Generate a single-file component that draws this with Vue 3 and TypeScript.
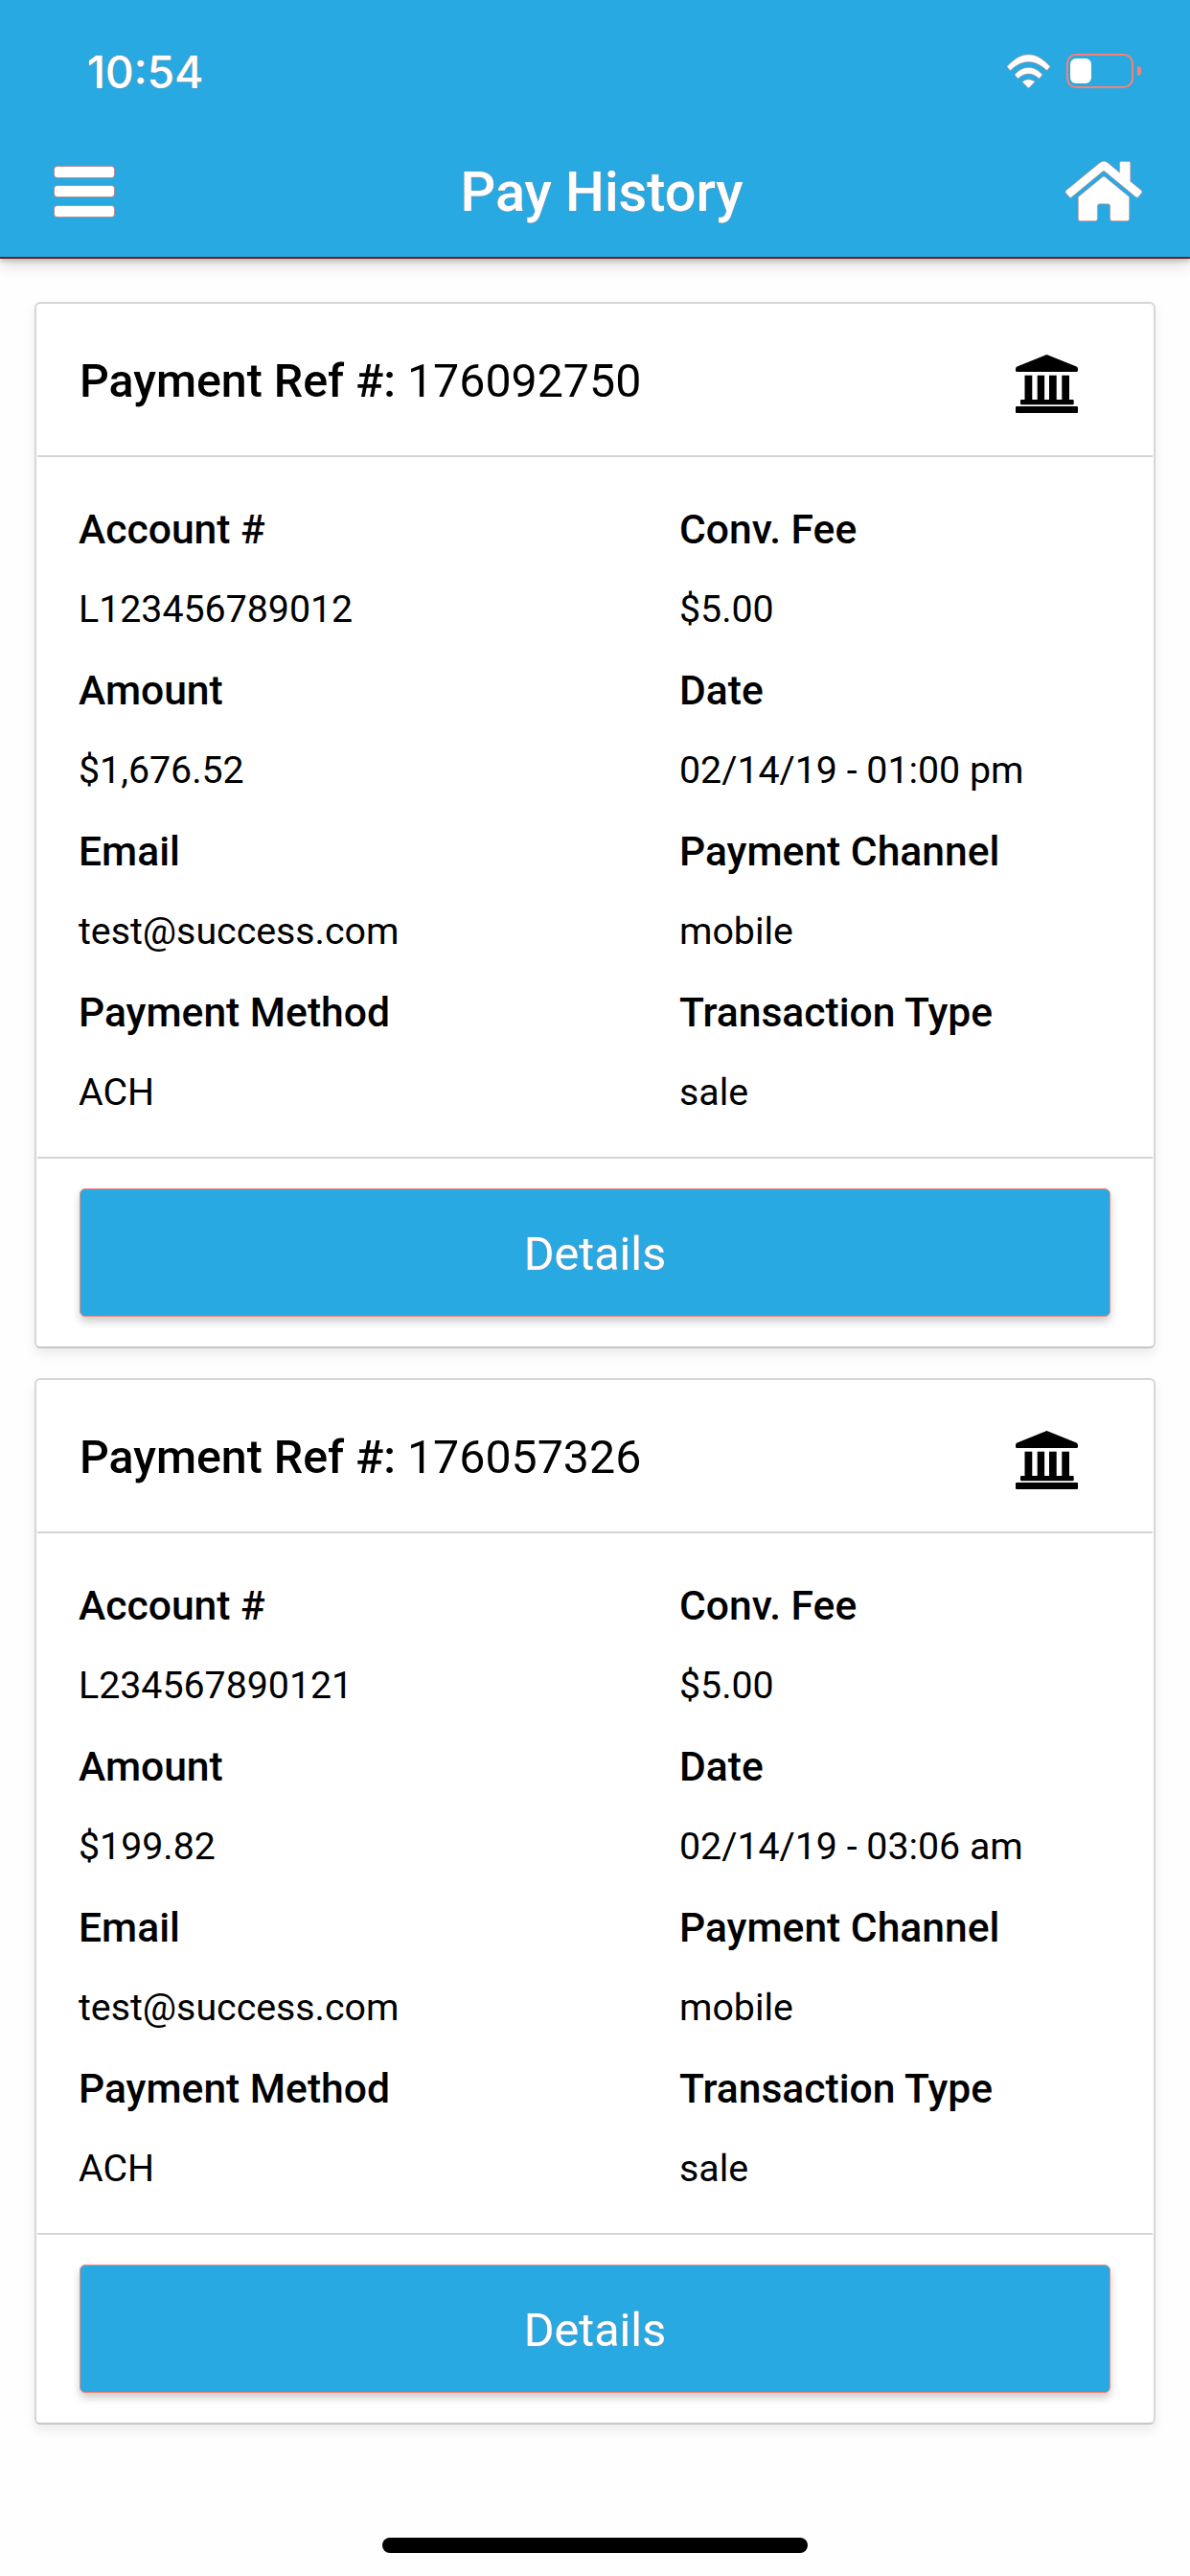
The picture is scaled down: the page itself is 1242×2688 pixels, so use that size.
<script setup lang="ts">
interface Field { label: string; value: string }
interface Payment { ref: string; fields: Field[] }

const payments: Payment[] = [
  {
    ref: '176092750',
    fields: [
      { label: 'Account #', value: 'L123456789012' },
      { label: 'Conv. Fee', value: '$5.00' },
      { label: 'Amount', value: '$1,676.52' },
      { label: 'Date', value: '02/14/19 - 01:00 pm' },
      { label: 'Email', value: 'test@success.com' },
      { label: 'Payment Channel', value: 'mobile' },
      { label: 'Payment Method', value: 'ACH' },
      { label: 'Transaction Type', value: 'sale' },
    ],
  },
  {
    ref: '176057326',
    fields: [
      { label: 'Account #', value: 'L234567890121' },
      { label: 'Conv. Fee', value: '$5.00' },
      { label: 'Amount', value: '$199.82' },
      { label: 'Date', value: '02/14/19 - 03:06 am' },
      { label: 'Email', value: 'test@success.com' },
      { label: 'Payment Channel', value: 'mobile' },
      { label: 'Payment Method', value: 'ACH' },
      { label: 'Transaction Type', value: 'sale' },
    ],
  },
]
</script>

<template>
  <div class="page">
    <header class="topbar">
      <div class="status">
        <span class="time">10:54</span>
        <div class="status-icons">
          <svg class="wifi" viewBox="0 0 47 36" aria-hidden="true">
            <path d="M1 13.500C6.500 7.500 14 1 23.500 1S40.500 7.500 46 13.500L42.500 17.500C37.500 12.500 31 8.500 23.500 8.500S9.500 12.500 4.500 17.500Z" />
            <path d="M9 22C12.500 18 17.500 14.500 23.500 14.500S34.500 18 38 22L34.500 26C31.500 23 28 21 23.500 21S15.500 23 12.500 26Z" />
            <path d="M17 29.500C18.500 28 20.800 27 23.500 27S28.500 28 30 29.500L23.500 36Z" />
          </svg>
          <div class="battery"><div class="battery-level"></div></div>
          <div class="battery-nub"></div>
        </div>
      </div>
      <nav class="navbar">
        <button class="menu" type="button" aria-label="Menu">
          <span></span><span></span><span></span>
        </button>
        <h1 class="title">Pay History</h1>
        <svg class="home" viewBox="0 0 576 512" aria-hidden="true">
          <path d="M280.37 148.26L96 300.11V464a16 16 0 0 0 16 16l112.06-.29a16 16 0 0 0 15.92-16V368a16 16 0 0 1 16-16h64a16 16 0 0 1 16 16v95.64a16 16 0 0 0 16 16.05L464 480a16 16 0 0 0 16-16V300L295.67 148.26a12.19 12.19 0 0 0-15.3 0zM571.6 251.47L488 182.56V44.05a12 12 0 0 0-12-12h-56a12 12 0 0 0-12 12v72.61L318.47 43a48 48 0 0 0-61 0L4.34 251.47a12 12 0 0 0-1.6 16.9l25.5 31A12 12 0 0 0 45.15 301l235.22-193.74a12.19 12.19 0 0 1 15.3 0L530.9 301a12 12 0 0 0 16.9-1.6l25.5-31a12 12 0 0 0-1.7-16.93z" />
        </svg>
      </nav>
    </header>

    <main class="list">
      <article v-for="p in payments" :key="p.ref" class="card">
        <div class="card-head">
          <div class="ref"><b>Payment Ref #:</b> {{ p.ref }}</div>
          <svg class="bank" viewBox="0 0 65 61" aria-hidden="true">
            <path d="M32.500 0L63.500 12.500Q65 13 65 15V16.500Q65 18 63.500 18H1.500Q0 18 0 16.500V15Q0 13 1.500 12.500Z" />
            <rect x="9.500" y="21.700" width="7.800" height="26" />
            <rect x="22.700" y="21.700" width="7.400" height="26" />
            <rect x="35" y="21.700" width="7.700" height="26" />
            <rect x="48.300" y="21.700" width="7.700" height="26" />
            <rect x="5" y="47" width="55.700" height="5.300" rx="1" />
            <rect x="0" y="54" width="65" height="7" rx="1" />
          </svg>
        </div>
        <div class="grid">
          <div v-for="f in p.fields" :key="f.label" class="field">
            <div class="label">{{ f.label }}</div>
            <div class="value">{{ f.value }}</div>
          </div>
        </div>
        <div class="card-foot">
          <button class="details" type="button">Details</button>
        </div>
      </article>
    </main>

    <div class="home-indicator"></div>
  </div>
</template>

<style scoped>
.page {
  width: 1242px;
  height: 2688px;
  display: flex;
  flex-direction: column;
  background: #fefefe;
  font-family: Roboto, "Liberation Sans", sans-serif;
  color: #000;
  overflow: hidden;
}
.topbar {
  height: 268px;
  background: #29a9e1;
  border-bottom: 2px solid #6b2020;
  box-sizing: content-box;
  box-shadow: 0 3px 4px rgba(0, 0, 0, 0.16), 0 8px 14px rgba(0, 0, 0, 0.12);
  display: flex;
  flex-direction: column;
  flex: none;
}
.status {
  height: 150px;
  padding: 52px 51px 0 91px;
  box-sizing: border-box;
  display: flex;
  justify-content: space-between;
  align-items: flex-start;
}
.time {
  font-family: Inter, Roboto, sans-serif;
  font-weight: 500;
  font-size: 46px;
  line-height: 46px;
  color: #fff;
  text-shadow: 0 0 1px #fa8072;
}
.status-icons {
  display: flex;
  align-items: center;
  height: 36px;
  margin-top: 4px;
}
.wifi {
  width: 47px;
  height: 36px;
  fill: #fff;
  stroke: #fa8072;
  stroke-width: 0.5;
  margin-right: 16px;
}
.battery {
  width: 70px;
  height: 36px;
  box-sizing: border-box;
  border: 2px solid #fa8072;
  border-radius: 10px;
  padding: 3px 2px;
}
.battery-level {
  width: 22px;
  height: 100%;
  background: #fff;
  border-radius: 6px;
}
.battery-nub {
  width: 4px;
  height: 10px;
  margin-left: 4px;
  background: #fa8072;
  border-radius: 0 5px 5px 0;
}
.navbar {
  flex: 1;
  position: relative;
  display: flex;
  align-items: flex-start;
  justify-content: space-between;
  padding: 13.500px 50px 0 57px;
}
.menu {
  width: 62px;
  height: 52px;
  margin-top: 10px;
  padding: 0;
  border: 0;
  background: none;
  display: flex;
  flex-direction: column;
  justify-content: space-between;
}
.menu span {
  display: block;
  height: 11px;
  background: #fff;
  border-radius: 3px;
  box-shadow: 0 0 0 1px rgba(250, 128, 114, 0.7);
}
.title {
  position: absolute;
  left: 14px;
  right: 0;
  top: 18px;
  margin: 0;
  text-align: center;
  font-weight: 500;
  font-size: 57.600px;
  line-height: 66px;
  color: #fff;
  text-shadow: 0 0 1px #fa8072;
}
.home {
  width: 80px;
  height: 71px;
  fill: #fff;
  stroke: #fa8072;
  stroke-width: 4;
}
.list {
  padding: 45px 36px 0;
  display: flex;
  flex-direction: column;
  gap: 31px;
}
.card {
  height: 1092px;
  box-sizing: border-box;
  background: #fff;
  border: 2px solid #d6d6d6;
  border-bottom-color: #c6c6c6;
  border-radius: 6px;
  box-shadow: 0 6px 12px rgba(0, 0, 0, 0.08);
  display: flex;
  flex-direction: column;
}
.card-head {
  height: 160px;
  margin: 0 1px;
  padding: 0 78px 0 44px;
  box-sizing: border-box;
  border-bottom: 2px solid #d4d4d4;
  display: flex;
  align-items: center;
  justify-content: space-between;
}
.ref {
  font-size: 48.300px;
  line-height: 56px;
  margin-top: 4px;
}
.ref b {
  font-weight: 500;
}
.bank {
  width: 65px;
  height: 61px;
  margin-top: 8px;
  fill: #000;
}
.grid {
  flex: 1;
  padding: 33px 44px 0;
  display: grid;
  grid-template-columns: 627px 1fr;
  grid-auto-rows: 168px;
}
.field {
  display: flex;
  flex-direction: column;
}
.label,
.value {
  height: 84px;
  display: flex;
  align-items: center;
}
.label {
  font-size: 42.600px;
  font-weight: 500;
}
.value {
  font-size: 39.300px;
}
.card-foot {
  height: 198px;
  margin: 0 1px;
  padding: 31px 44px 0;
  box-sizing: border-box;
  border-top: 2px solid #d4d4d4;
}
.details {
  display: block;
  width: 100%;
  height: 134px;
  padding: 2px 0 0;
  box-sizing: border-box;
  border: 1px solid #f08a80;
  border-radius: 6px;
  background: #29a9e1;
  color: #fff;
  font-family: inherit;
  font-size: 48.500px;
  text-shadow: 0 0 1px #fa8072;
  box-shadow: 0 5px 8px rgba(0, 0, 0, 0.2);
}
.home-indicator {
  width: 444px;
  height: 16px;
  margin: auto auto 24px;
  background: #000;
  border-radius: 8px;
  flex: none;
}
</style>
